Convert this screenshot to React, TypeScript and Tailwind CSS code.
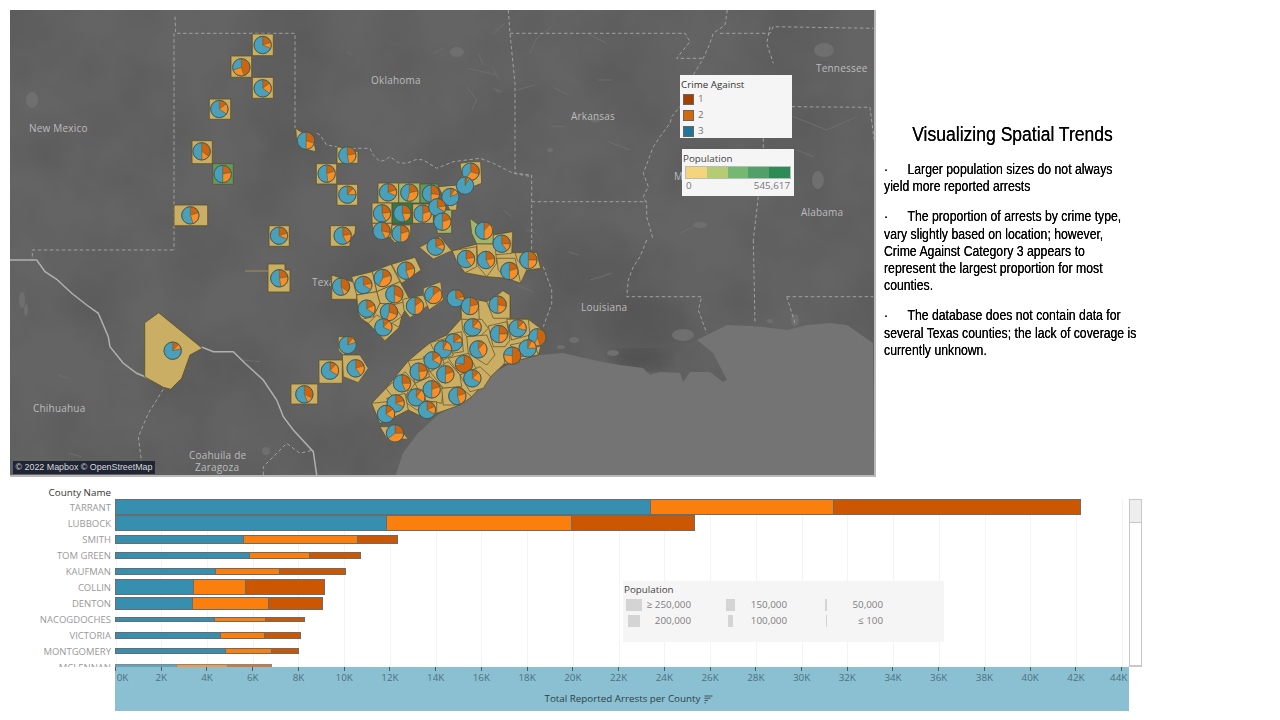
import React from "react";

type P = [number, number];
const A = (x: number, y: number): P => [160 + x / 3, 20 + y / 3];
const B = (x: number, y: number): P => [280 + x / 3, 220 + y / 3];
const C = (x: number, y: number): P => [x / 3, 230 + y / 3];
const D = (x: number, y: number): P => [480 + x / 3, y / 3];
const E = (x: number, y: number): P => [480 + x / 3, 240 + y / 3];

const line = (f: (x: number, y: number) => P, nums: number[]) => {
  const out: string[] = [];
  for (let i = 0; i < nums.length; i += 2) {
    const p = f(nums[i], nums[i + 1]);
    out.push(p[0].toFixed(1) + "," + p[1].toFixed(1));
  }
  return out.join(" ");
};

const TAN = "#c9ae63";
const LG = "#a3b56c";
const G = "#5f9a63";
const DG = "#2f7d50";

const backing: number[][] = [
  [275, 550, 318, 505, 385, 422, 450, 368, 500, 345, 542, 298, 542, 235, 595, 240, 620, 245, 668, 212, 690, 225, 690, 295, 745, 298, 795, 335, 775, 405, 672, 432, 632, 470, 575, 530, 540, 555, 470, 580, 435, 595, 385, 570, 345, 590, 300, 610],
  [155, 165, 230, 190, 277, 155, 405, 112, 423, 150, 360, 190, 390, 240, 365, 290, 358, 322, 315, 362, 265, 310, 245, 298, 235, 280, 230, 238, 155, 238],
  [517, 92, 590, 72, 640, 45, 698, 35, 695, 98, 770, 98, 782, 145, 740, 150, 722, 190, 680, 175, 620, 170, 555, 158, 530, 125],
];

const polysA: [string, number[]][] = [
  [TAN, [277, 42, 340, 42, 340, 107, 277, 107]],
  [TAN, [213, 108, 275, 108, 275, 172, 213, 172]],
  [TAN, [277, 172, 340, 172, 340, 235, 277, 235]],
  [TAN, [148, 237, 212, 237, 212, 298, 148, 298]],
  [TAN, [96, 362, 157, 362, 157, 431, 96, 431]],
  [G, [158, 431, 220, 431, 220, 493, 158, 493]],
  [TAN, [42, 555, 143, 555, 143, 617, 42, 617]],
  [TAN, [327, 617, 388, 617, 388, 679, 327, 679]],
  [TAN, [407, 325, 430, 340, 460, 345, 467, 395, 425, 385, 410, 365]],
  [TAN, [531, 380, 560, 385, 594, 395, 594, 430, 531, 430]],
  [TAN, [469, 431, 530, 431, 530, 492, 469, 492]],
  [TAN, [531, 493, 593, 493, 593, 556, 531, 556]],
  [TAN, [511, 617, 587, 617, 585, 640, 570, 660, 570, 679, 511, 679]],
  [TAN, [654, 489, 716, 489, 716, 549, 654, 549]],
  [LG, [716, 489, 780, 489, 780, 549, 716, 549]],
  [G, [780, 492, 835, 492, 835, 549, 780, 549]],
  [TAN, [835, 500, 893, 495, 890, 570, 870, 572, 850, 530]],
  [TAN, [900, 430, 930, 425, 962, 425, 965, 490, 940, 500, 910, 495]],
  [TAN, [636, 549, 696, 549, 696, 610, 636, 610]],
  [DG, [697, 549, 757, 549, 757, 610, 697, 610]],
  [TAN, [758, 552, 820, 552, 820, 610, 758, 610]],
  [LG, [825, 570, 875, 570, 875, 640, 832, 640]],
  [TAN, [636, 610, 696, 610, 696, 650, 655, 660, 640, 640]],
  [TAN, [696, 615, 752, 615, 752, 645, 705, 668, 692, 655]],
];

const polysB: [string, number[]][] = [
  [TAN, [418, 82, 480, 50, 515, 92, 460, 117]],
  [LG, [570, -5, 600, 18, 640, 18, 640, 72, 590, 72, 575, 40]],
  [TAN, [640, 45, 698, 35, 695, 100, 640, 105]],
  [TAN, [517, 92, 590, 80, 590, 140, 555, 158, 530, 125]],
  [TAN, [590, 72, 645, 72, 650, 130, 620, 170, 595, 140]],
  [TAN, [650, 115, 705, 115, 722, 190, 680, 175, 655, 150]],
  [TAN, [705, 98, 770, 98, 782, 145, 740, 150, 712, 120]],
  [TAN, [155, 165, 230, 190, 230, 238, 155, 238]],
  [TAN, [277, 155, 333, 133, 360, 185, 290, 215]],
  [TAN, [335, 133, 405, 112, 423, 150, 365, 190]],
  [TAN, [215, 170, 277, 155, 290, 215, 230, 225]],
  [TAN, [290, 215, 360, 185, 390, 240, 340, 255, 300, 250]],
  [TAN, [230, 225, 290, 215, 300, 250, 280, 290, 245, 298, 235, 280]],
  [TAN, [300, 250, 340, 255, 365, 290, 335, 310, 280, 290]],
  [TAN, [265, 310, 290, 285, 335, 310, 358, 322, 315, 362]],
  [TAN, [368, 238, 430, 225, 447, 255, 390, 293, 372, 270]],
  [TAN, [430, 205, 482, 185, 490, 240, 447, 270, 430, 225]],
  [TAN, [498, 232, 520, 212, 555, 225, 540, 258, 510, 250]],
  [TAN, [542, 235, 595, 240, 598, 300, 545, 298]],
  [TAN, [545, 298, 605, 298, 625, 325, 600, 350, 560, 350, 548, 330]],
  [TAN, [620, 245, 655, 225, 668, 212, 690, 225, 690, 295, 640, 295]],
  [TAN, [625, 318, 680, 305, 690, 360, 675, 380, 640, 380]],
  [TAN, [680, 298, 745, 298, 750, 345, 695, 360]],
  [TAN, [745, 345, 795, 335, 790, 375, 760, 385]],
  [TAN, [690, 375, 760, 360, 775, 405, 725, 410]],
  [TAN, [680, 395, 720, 395, 718, 428, 672, 432]],
  [TAN, [560, 350, 620, 345, 645, 405, 620, 435, 565, 400]],
  [TAN, [500, 345, 545, 335, 550, 395, 515, 400]],
  [TAN, [450, 368, 500, 355, 520, 405, 480, 425]],
  [TAN, [430, 410, 480, 395, 495, 440, 450, 455]],
  [TAN, [505, 415, 565, 400, 590, 450, 540, 465]],
  [TAN, [540, 465, 600, 440, 632, 470, 610, 505, 570, 515]],
  [TAN, [450, 455, 505, 425, 540, 465, 545, 500, 490, 505]],
  [TAN, [385, 422, 440, 415, 448, 470, 405, 490]],
  [TAN, [318, 505, 375, 455, 405, 490, 385, 520, 345, 540]],
  [TAN, [405, 490, 450, 470, 490, 505, 485, 550, 430, 540]],
  [TAN, [485, 505, 540, 500, 575, 530, 540, 555, 490, 555]],
  [TAN, [385, 510, 430, 510, 440, 555, 410, 570, 375, 545]],
  [TAN, [320, 535, 375, 520, 385, 570, 345, 590]],
  [TAN, [415, 550, 470, 545, 470, 580, 435, 595]],
  [TAN, [275, 550, 320, 545, 345, 590, 300, 610]],
  [TAN, [300, 620, 355, 620, 385, 658, 320, 655]],
  [TAN, [175, 350, 220, 350, 232, 378, 190, 405, 175, 390]],
  [TAN, [117, 420, 187, 420, 187, 490, 117, 490]],
  [TAN, [187, 405, 240, 405, 265, 445, 235, 488, 190, 470]],
  [TAN, [33, 492, 113, 492, 113, 552, 33, 552]],
];

const piesA: number[][] = [
  [308, 75, 0.2, 0.12],
  [244, 142, 0.45, 0.25],
  [308, 205, 0.15, 0.2],
  [178, 267, 0.15, 0.2],
  [125, 394, 0.35, 0.15],
  [188, 462, 0.22, 0.28],
  [91, 586, 0.2, 0.25],
  [357, 647, 0.2, 0.12],
  [438, 362, 0.3, 0.2],
  [562, 406, 0.22, 0.25],
  [500, 461, 0.2, 0.28],
  [562, 524, 0.12, 0.13],
  [684, 517, 0.2, 0.12],
  [748, 518, 0.22, 0.32],
  [813, 521, 0.27, 0.23],
  [871, 531, 0.08, 0.1],
  [932, 455, 0.3, 0.3],
  [915, 497, 0.05, 0.04],
  [666, 580, 0.23, 0.2],
  [727, 580, 0.25, 0.2],
  [788, 581, 0.2, 0.3],
  [832, 562, 0.22, 0.12],
  [847, 605, 0.2, 0.3],
];

const piesB: number[][] = [
  [188, 47, 0.22, 0.2], [305, 33, 0.28, 0.15], [362, 41, 0.2, 0.3], [467, 80, 0.2, 0.12],
  [612, 32, 0.12, 0.38], [665, 71, 0.25, 0.15], [558, 117, 0.22, 0.18], [618, 120, 0.22, 0.2],
  [688, 153, 0.2, 0.3], [745, 120, 0.25, 0.25], [183, 200, 0.35, 0.1], [250, 195, 0.22, 0.12],
  [308, 174, 0.2, 0.38], [378, 152, 0.2, 0.25], [343, 223, 0.32, 0.18], [260, 266, 0.18, 0.17],
  [327, 276, 0.3, 0.25], [310, 322, 0.12, 0.2], [405, 258, 0.15, 0.35], [460, 225, 0.15, 0.45],
  [527, 235, 0.22, 0.08], [570, 258, 0.22, 0.3], [578, 322, 0.12, 0.18], [653, 254, 0.28, 0.22],
  [657, 342, 0.25, 0.25], [713, 325, 0.12, 0.17], [772, 352, 0.45, 0.12], [743, 385, 0.08, 0.17],
  [697, 407, 0.5, 0.27], [595, 388, 0.12, 0.3], [521, 367, 0.15, 0.1], [489, 388, 0.08, 0.2],
  [458, 421, 0.15, 0.18], [552, 432, 0.72, 0.05], [577, 475, 0.13, 0.2], [496, 463, 0.2, 0.3],
  [416, 455, 0.23, 0.25], [366, 490, 0.25, 0.18], [455, 508, 0.2, 0.3], [532, 528, 0.2, 0.25],
  [409, 532, 0.1, 0.25], [347, 550, 0.2, 0.12], [441, 570, 0.18, 0.15], [318, 582, 0.15, 0.2],
  [345, 640, 0.25, 0.4], [203, 375, 0.1, 0.1], [150, 452, 0.12, 0.22], [227, 445, 0.2, 0.2],
  [73, 523, 0.32, 0.12],
];

const wedge = (cx: number, cy: number, r: number, a0: number, a1: number) => {
  const t0 = a0 * 2 * Math.PI;
  const t1 = a1 * 2 * Math.PI;
  const x0 = cx + r * Math.sin(t0);
  const y0 = cy - r * Math.cos(t0);
  const x1 = cx + r * Math.sin(t1);
  const y1 = cy - r * Math.cos(t1);
  const large = a1 - a0 > 0.5 ? 1 : 0;
  return `M${cx} ${cy}L${x0.toFixed(2)} ${y0.toFixed(2)}A${r} ${r} 0 ${large} 1 ${x1.toFixed(2)} ${y1.toFixed(2)}Z`;
};

function Pie({ cx, cy, d, o, r = 8.7 }: { cx: number; cy: number; d: number; o: number; r?: number }) {
  return (
    <g stroke="#5a5f45" strokeWidth={0.5}>
      <path d={wedge(cx, cy, r, 0, d)} fill="#cf640f" />
      <path d={wedge(cx, cy, r, d, d + o)} fill="#fb8d22" />
      <path d={wedge(cx, cy, r, d + o, 1)} fill="#4aa0ba" />
      <circle cx={cx} cy={cy} r={r} fill="none" stroke="#3c5a60" strokeWidth={0.9} />
    </g>
  );
}

const dashed: [(x: number, y: number) => P, number[]][] = [
  [A, [45, -10, 47, 40, 405, 40, 405, 325]],
  [A, [42, 40, 42, 690]],
  [C, [520, 60, 97, 60, 97, 90]],
  [A, [470, 340, 480, 345, 500, 375, 530, 380, 560, 390, 590, 385, 630, 385, 640, 405, 660, 425, 675, 420, 690, 410, 715, 428, 740, 430, 770, 418, 790, 420, 830, 445, 880, 425, 960, 415, 1000, 430, 1060, 460, 1115, 470]],
  [D, [85, 30, 90, 100, 105, 250, 105, 520, 155, 525, 155, 720]],
  [D, [90, 100, 615, 100, 630, 125, 590, 175, 670, 175]],
  [D, [742, 30, 735, 75, 700, 100, 690, 130, 670, 175, 640, 225, 620, 280, 600, 320, 575, 350, 570, 370, 540, 410, 520, 440, 505, 480, 490, 520, 505, 560, 490, 590, 500, 610, 500, 650, 520, 720]],
  [D, [720, 100, 870, 100, 880, 80, 1180, 85]],
  [D, [870, 80, 860, 130, 880, 190]],
  [D, [155, 605, 500, 605]],
  [D, [935, 320, 1170, 322, 1190, 480]],
  [D, [850, 415, 850, 445]],
  [D, [835, 590, 820, 720]],
  [E, [155, 0, 155, 30]],
  [E, [190, 80, 215, 150, 215, 190, 190, 260]],
  [E, [820, 0, 825, 250]],
  [E, [500, 0, 480, 50, 460, 80, 445, 120, 440, 170, 665, 170, 655, 210, 680, 280]],
  [E, [920, 170, 1180, 170]],
  [E, [920, 170, 945, 250]],
  [C, [490, 478, 445, 550, 415, 620, 425, 700]],
  [C, [790, 735, 790, 710, 860, 640, 900, 670, 940, 660]],
];

const river = [
  [30, 90, 110, 90, 135, 125, 170, 148, 215, 190, 260, 225, 295, 250, 325, 320, 330, 350, 370, 400, 410, 430, 435, 440],
  [435, 440, 510, 475, 540, 440, 570, 365, 607, 352, 640, 365, 700, 365, 735, 400, 790, 450, 830, 510, 850, 560, 880, 600, 940, 665, 950, 735],
];

const squiggles: [(x: number, y: number) => P, number[]][] = [
  [D, [35, 105, 75, 70]], [D, [150, 160, 170, 115, 215, 80]], [D, [320, 100, 380, 130]],
  [D, [40, 265, 60, 280]], [D, [110, 270, 165, 255]], [D, [220, 262, 265, 285]],
  [D, [355, 240, 395, 240]], [D, [215, 378, 255, 380]], [D, [385, 425, 450, 450]],
  [D, [40, 205, 55, 235]], [D, [940, 350, 1040, 390, 1130, 350]], [D, [950, 450, 1000, 470]],
  [D, [140, 690, 170, 700]], [D, [600, 700, 640, 680]], [D, [70, 630, 95, 650]],
  [A, [820, 100, 850, 85]], [A, [920, 200, 950, 240, 935, 270]], [A, [925, 145, 1010, 165]],
  [A, [1000, 205, 1025, 215]], [A, [560, 95, 575, 105]], [A, [955, 100, 970, 135]],
  [C, [175, 435, 205, 445]], [C, [205, 670, 245, 680]], [C, [730, 390, 780, 395]],
  [E, [330, 120, 395, 100]], [E, [265, 35, 295, 45]], [E, [110, 135, 160, 155]],
];

const blobs: [number, number, number, number][] = [
  [32, 100, 6, 8], [22, 300, 3, 8], [26, 310, 2, 6],
  [457, 52, 7, 5], [824, 50, 10, 7], [818, 180, 6, 9], [700, 225, 7, 3], [550, 150, 3, 2],
  [266, 451, 4, 4], [683, 335, 11, 6], [613, 353, 6, 3], [574, 340, 5, 3], [561, 347, 4, 2],
  [795, 320, 4, 6], [770, 321, 3, 2], [595, 120, 5, 2],
];

const gulf = "395,477 403,453 418,433 438,415 470,395 493,373 513,362 540,355 563,353 580,357 603,362 620,365 643,368 650,375 660,372 680,373 683,382 690,372 710,372 723,382 727,380 713,353 697,340 713,332 727,325 753,326 763,327 787,330 807,325 830,323 847,325 873,343 874,476";

function MapDrawing() {
  return (
    <svg viewBox="10 10 864 465" className="block w-full h-full">
      <defs>
        <filter id="mott" x="0" y="0" width="100%" height="100%">
          <feTurbulence type="fractalNoise" baseFrequency="0.012" numOctaves={4} seed={4} />
          <feColorMatrix values="0 0 0 0 0  0 0 0 0 0  0 0 0 0 0  1.2 0 0 0 -0.4" />
        </filter>
        <filter id="soft"><feGaussianBlur stdDeviation="8" /></filter>
      </defs>
      <rect x="10" y="10" width="864" height="465" fill="#646464" />
      <rect x="10" y="10" width="864" height="465" filter="url(#mott)" opacity="0.14" />
      <ellipse cx="640" cy="325" rx="50" ry="28" fill="#4d4d4d" filter="url(#soft)" opacity="0.4" />
      <ellipse cx="590" cy="260" rx="40" ry="40" fill="#525252" filter="url(#soft)" opacity="0.3" />
      <ellipse cx="640" cy="360" rx="30" ry="10" fill="#484848" filter="url(#soft)" opacity="0.7" />
      {blobs.map((b, i) => (
        <ellipse key={i} cx={b[0]} cy={b[1]} rx={b[2]} ry={b[3]} fill="#6f6f6f" />
      ))}
      {squiggles.map(([f, n], i) => (
        <polyline key={i} points={line(f, n)} fill="none" stroke="#6e6e6e" strokeWidth={1} />
      ))}
      <polygon points={gulf} fill="#747474" />
      {dashed.map(([f, n], i) => (
        <polyline key={i} points={line(f, n)} fill="none" stroke="#a0a0a0" strokeWidth={1} strokeDasharray="3.5 2.5" />
      ))}
      {river.map((n, i) => (
        <polyline key={i} points={line(C, n)} fill="none" stroke="#b0b0b0" strokeWidth={1.5} />
      ))}
      <g fontSize={10} fill="#bcbcbc" fontFamily="'Open Sans', sans-serif" letterSpacing={0.2}>
        <text x={29} y={132}>New Mexico</text>
        <text x={371} y={84}>Oklahoma</text>
        <text x={571} y={120}>Arkansas</text>
        <text x={816} y={72}>Tennessee</text>
        <text x={801} y={216}>Alabama</text>
        <text x={581} y={311}>Louisiana</text>
        <text x={312} y={286}>Texas</text>
        <text x={33} y={412}>Chihuahua</text>
        <text x={189} y={459}>Coahuila de</text>
        <text x={195} y={471}>Zaragoza</text>
        <text x={674} y={180}>M</text>
      </g>
      <polygon points={line(C, [434, 68, 476, 38, 607, 145, 570, 165, 545, 235, 512, 268, 490, 262, 434, 230].map((v, i) => (i % 2 ? v + 210 : v)))} fill={TAN} stroke="#5d4f25" strokeWidth={0.8} />
      <polygon points="268,264 285,264 285,270 290,270 290,292 268,292" fill={TAN} stroke="#5d4f25" strokeWidth={0.8} />
      <line x1={245} y1={271} x2={268} y2={271} stroke="#a98f50" strokeWidth={1} />
      {backing.map((n, i) => (
        <polygon key={"k" + i} points={line(B, n)} fill={TAN} stroke="#5d4f25" strokeWidth={0.8} />
      ))}
      {polysA.map(([fill, n], i) => (
        <polygon key={"a" + i} points={line(A, n)} fill={fill} stroke="#5d4f25" strokeWidth={0.8} />
      ))}
      {polysB.map(([fill, n], i) => (
        <polygon key={"b" + i} points={line(B, n)} fill={fill} stroke="#5d4f25" strokeWidth={0.7} />
      ))}
      <Pie cx={172.7} cy={350.7} d={0.12} o={0.1} />
      <Pie cx={279.3} cy={278.3} d={0.22} o={0.25} />
      {piesA.map((p, i) => {
        const [x, y] = A(p[0], p[1]);
        return <Pie key={"pa" + i} cx={x} cy={y} d={p[2]} o={p[3]} />;
      })}
      {piesB.map((p, i) => {
        const [x, y] = B(p[0], p[1]);
        return <Pie key={"pb" + i} cx={x} cy={y} d={p[2]} o={p[3]} />;
      })}
    </svg>
  );
}

const bars: [string, number, number, number, number][] = [
  ["TARRANT", 16, 650, 833, 1081],
  ["LUBBOCK", 16, 386, 571, 695],
  ["SMITH", 9, 243.3, 357, 397.7],
  ["TOM GREEN", 7, 248.7, 308.7, 361],
  ["KAUFMAN", 7, 214.7, 279, 345.7],
  ["COLLIN", 16, 192.7, 244.7, 325],
  ["DENTON", 13, 192, 267.7, 323],
  ["NACOGDOCHES", 5, 213.7, 264.7, 305],
  ["VICTORIA", 7, 219.7, 264, 301],
  ["MONTGOMERY", 6, 225, 271, 299.3],
  ["MCLENNAN", 6, 175.7, 226.7, 271.7],
];

const ticks = Array.from({ length: 23 }, (_, i) => i * 2);

const sizes: [string, number][] = [
  ["≥ 250,000", 16],
  ["200,000", 12],
  ["150,000", 9],
  ["100,000", 5],
  ["50,000", 2],
  ["≤ 100", 1],
];

const sans = "font-['Open_Sans','Noto_Sans',sans-serif]";

export default function App() {
  return (
    <div className={`w-[1280px] h-[720px] bg-white overflow-hidden pt-[10px] flex flex-col ${sans}`}>
      <div className="flex h-[467px] pl-[10px]">
        <div className="relative w-[866px] h-[467px] border-r-2 border-b-2 border-[#b9b9b9] bg-[#636363]">
          <MapDrawing />
          <div className="absolute left-[670px] top-[65px] w-[112px] h-[63px] bg-[#f5f5f5] pl-px pt-[3px]">
            <div className="text-[9.8px] leading-[13px] text-[#333]">Crime Against</div>
            {[["1", "bg-[#a53f02]"], ["2", "bg-[#d2690b]"], ["3", "bg-[#20759b]"]].map(([n, c]) => (
              <div key={n} className="flex items-center h-4 pl-[2px] text-[9.8px] text-[#777]">
                <span className={`w-[11px] h-[11px] border border-[#666] ${c}`} />
                <span className="ml-[4px]">{n}</span>
              </div>
            ))}
          </div>
          <div className="absolute left-[672px] top-[139px] w-[112px] h-[47px] bg-[#f5f5f5] pt-[3px] px-[3px]">
            <div className="text-[9.8px] leading-[13px] text-[#444] -ml-[2px]">Population</div>
            <div className="flex h-[13px] border border-[#bbb] mt-[1px]">
              <span className="flex-1 bg-[#f4d47c]" />
              <span className="flex-1 bg-[#b4cc74]" />
              <span className="flex-1 bg-[#74b874]" />
              <span className="flex-1 bg-[#51a067]" />
              <span className="flex-1 bg-[#2f8b55]" />
            </div>
            <div className="flex justify-between text-[9.8px] leading-[14px] text-[#777] px-px">
              <span>0</span>
              <span>545,617</span>
            </div>
          </div>
          <div className="absolute left-[3px] bottom-[1px] h-[13px] w-[142px] bg-[#1f2535] text-[8.9px] leading-[13px] text-center text-[#d8d8d8] font-['Liberation_Sans',sans-serif]">
            © 2022 Mapbox © OpenStreetMap
          </div>
        </div>
        <div className="ml-[8px] w-[262px] pt-[113px] text-black font-['Liberation_Sans',sans-serif] [text-shadow:0_0_0.5px_#000]">
          <h1 className="w-[257px] whitespace-nowrap text-center text-[19.5px] leading-[22px] scale-x-[0.9]">
            Visualizing Spatial Trends
          </h1>
          <div className="mt-[16px] text-[14px] leading-[17.3px] whitespace-nowrap origin-left scale-x-[0.875]">
            <p>
              <span className="inline-block w-[26.8px]">·</span>Larger population sizes do not always
              <br />
              yield more reported arrests
            </p>
            <p className="mt-[12.7px]">
              <span className="inline-block w-[26.8px]">·</span>The proportion of arrests by crime type,
              <br />
              vary slightly based on location; however,
              <br />
              Crime Against Category 3 appears to
              <br />
              represent the largest proportion for most
              <br />
              counties.
            </p>
            <p className="mt-[12.7px]">
              <span className="inline-block w-[26.8px]">·</span>The database does not contain data for
              <br />
              several Texas counties; the lack of coverage is
              <br />
              currently unknown.
            </p>
          </div>
        </div>
      </div>

      <div className="mt-[10px] h-3 w-[111px] text-right text-[9.8px] leading-3 text-[#333]">County Name</div>

      <div className="flex">
        <div className="relative w-[1129px] h-[168px] overflow-hidden">
          {ticks.map((t) => (
            <span key={t} className="absolute top-0 bottom-0 w-px bg-[#f4f4f4]" style={{ left: 115.5 + t * 22.87 }} />
          ))}
          {bars.map(([name, h, a, b, c], i) => (
            <div key={name} className="relative flex items-center h-4">
              <span className="w-[111px] shrink-0 pt-[2px] text-right text-[9.5px] text-[#999] whitespace-nowrap">{name}</span>
              <div
                className={`ml-[4px] flex border border-[#6b6b6b] ${i === 10 ? "opacity-80" : ""}`}
                style={{ height: h, width: c - 115 }}
              >
                <span className="bg-[#378fb0] border-r border-[#6b6b6b]" style={{ width: a - 115 }} />
                <span className="bg-[#fa7f0d] border-r border-[#6b6b6b]" style={{ width: b - a }} />
                <span className="bg-[#cb5703] flex-1" />
              </div>
            </div>
          ))}
          <div className="absolute left-[623px] top-[82px] w-[321px] h-[61px] bg-[#f5f5f5] pl-[1px] pt-[2px]">
            <div className="text-[9.8px] leading-[13px] text-[#444]">Population</div>
            <div className="grid grid-cols-3 grid-rows-2 grid-flow-col w-[288px] mt-[1px]">
              {sizes.map(([label, w]) => (
                <div key={label} className="flex items-center h-4 text-[9.8px] text-[#808080]">
                  <span className="w-[20px] flex justify-center">
                    <span className="bg-[#d4d4d4] h-3" style={{ width: w }} />
                  </span>
                  <span className="w-[47px] text-right whitespace-nowrap">{label}</span>
                </div>
              ))}
            </div>
          </div>
        </div>
        <div className="w-[13px] h-[168px] border border-[#c8c8c8] border-b-2">
          <div className="h-[23px] bg-[#eeeeee] border-b border-[#c8c8c8]" />
        </div>
      </div>

      <div className="ml-[115px] w-[1014px] h-[44px] bg-[#8ac0d2] overflow-hidden">
        <div className="flex -ml-[22.37px]">
          {ticks.map((t) => (
            <div key={t} className="w-[45.74px] shrink-0 flex flex-col items-center">
              <span className="w-px h-1 bg-[#3f5f6c]" />
              <span
                className={`mt-[1px] text-[9.8px] leading-[12px] text-[#4e7080] whitespace-nowrap ${t === 0 ? "translate-x-[7px]" : t === 44 ? "-translate-x-[3px]" : ""}`}
              >
                {t}K
              </span>
            </div>
          ))}
        </div>
        <div className="mt-[9px] flex items-center justify-center gap-[4px] pl-[14px] text-[9.8px] leading-[12px] text-[#2f3f45]">
          <span>Total Reported Arrests per County</span>
          <svg width="9" height="9" viewBox="0 0 9 9" fill="none" stroke="#44555c" strokeWidth="1">
            <path d="M0.5 1H8.5M0.5 3.2H6.5M0.5 5.4H4M0.5 7.8H2" />
          </svg>
        </div>
      </div>
    </div>
  );
}
